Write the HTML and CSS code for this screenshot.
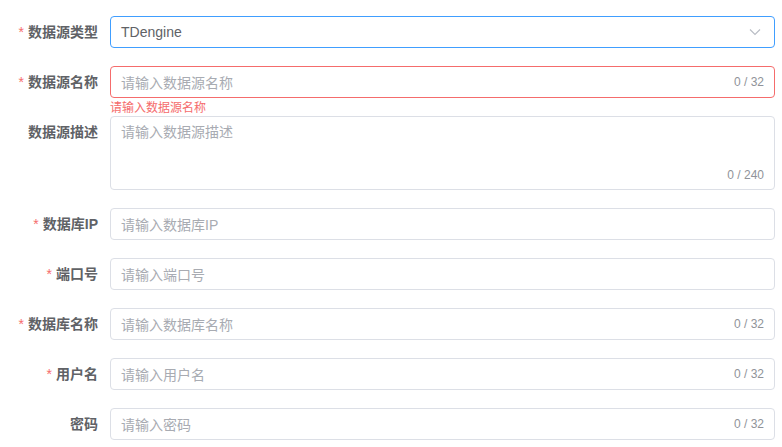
FILE: index.html
```html
<!DOCTYPE html>
<html lang="zh-CN">
<head>
<meta charset="utf-8">
<title>数据源配置</title>
<link rel="stylesheet" href="styles.css">
</head>
<body>
<form class="form">
  <div class="form-item">
    <label class="label required">数据源类型</label>
    <div class="content">
      <div class="input select is-focus">
        <span class="value">TDengine</span>
        <svg class="arrow" width="12" height="8" viewBox="0 0 12 8"><path d="M1 1.5 L6 6.5 L11 1.5" fill="none" stroke="#b8bcc4" stroke-width="1.1"/></svg>
      </div>
    </div>
  </div>

  <div class="form-item">
    <label class="label required">数据源名称</label>
    <div class="content">
      <div class="input is-error">
        <span class="placeholder">请输入数据源名称</span>
        <span class="count">0 / 32</span>
      </div>
      <div class="error">请输入数据源名称</div>
    </div>
  </div>

  <div class="form-item">
    <label class="label">数据源描述</label>
    <div class="content">
      <div class="textarea">
        <span class="placeholder">请输入数据源描述</span>
        <span class="count">0 / 240</span>
      </div>
    </div>
  </div>

  <div class="form-item">
    <label class="label required">数据库IP</label>
    <div class="content">
      <div class="input"><span class="placeholder">请输入数据库IP</span></div>
    </div>
  </div>

  <div class="form-item">
    <label class="label required">端口号</label>
    <div class="content">
      <div class="input"><span class="placeholder">请输入端口号</span></div>
    </div>
  </div>

  <div class="form-item">
    <label class="label required">数据库名称</label>
    <div class="content">
      <div class="input">
        <span class="placeholder">请输入数据库名称</span>
        <span class="count">0 / 32</span>
      </div>
    </div>
  </div>

  <div class="form-item">
    <label class="label required">用户名</label>
    <div class="content">
      <div class="input">
        <span class="placeholder">请输入用户名</span>
        <span class="count">0 / 32</span>
      </div>
    </div>
  </div>

  <div class="form-item">
    <label class="label">密码</label>
    <div class="content">
      <div class="input">
        <span class="placeholder">请输入密码</span>
        <span class="count">0 / 32</span>
      </div>
    </div>
  </div>
</form>
</body>
</html>
```

FILE: styles.css
```css
html, body {
  margin: 0;
  padding: 0;
  background: #fff;
}

body {
  font-family: "Liberation Sans", "Noto Sans CJK SC", sans-serif;
  font-size: 14px;
  color: #606266;
}

.form {
  padding: 16px 7px 0 0;
}

.form-item {
  display: flex;
  margin-bottom: 18px;
}

.label {
  box-sizing: border-box;
  width: 110px;
  flex: none;
  padding-right: 12px;
  text-align: right;
  line-height: 32px;
  font-weight: bold;
  color: #606266;
}

.label.required::before {
  content: "*";
  color: #f56c6c;
  margin-right: 4px;
  font-weight: normal;
}

.content {
  flex: 1;
  position: relative;
  min-width: 0;
}

.input {
  box-sizing: border-box;
  height: 32px;
  border: 1px solid #dcdfe6;
  border-radius: 4px;
  padding: 0 10px;
  display: flex;
  align-items: center;
  justify-content: space-between;
}

.input.is-focus {
  border-color: #409eff;
}

.input.is-error {
  border-color: #f56c6c;
}

.value {
  color: #606266;
}

.placeholder {
  color: #a8abb2;
}

.count {
  font-size: 12px;
  color: #909399;
}

.arrow {
  margin-right: 3px;
}

.error {
  position: absolute;
  left: 0;
  top: 100%;
  padding-top: 4px;
  font-size: 12px;
  line-height: 1;
  color: #f56c6c;
}

.textarea {
  box-sizing: border-box;
  height: 74px;
  border: 1px solid #dcdfe6;
  border-radius: 4px;
  padding: 5px 10px;
  line-height: 21px;
  position: relative;
}

.textarea .count {
  position: absolute;
  right: 10px;
  bottom: 5px;
  line-height: 18px;
}
```
